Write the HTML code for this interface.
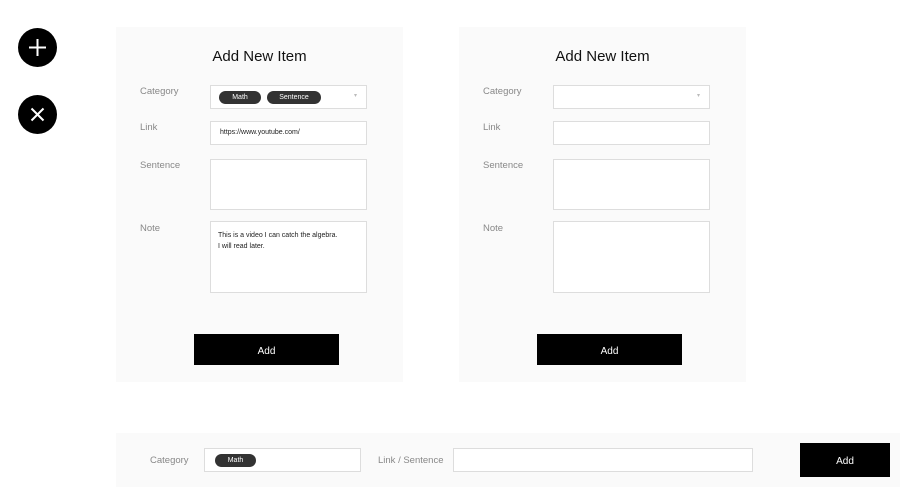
<!DOCTYPE html>
<html><head><style>
*{box-sizing:border-box;margin:0;padding:0}
body{width:900px;height:499px;background:#fff;font-family:"Liberation Sans",sans-serif;position:relative;overflow:hidden;color:#222}
.a{position:absolute}
.circ{width:39px;height:39px;border-radius:50%;background:#000}
.panel{background:#fafafa;width:287px;height:355px;top:27px}
.title{top:21px;width:100%;text-align:center;font-size:15px;color:#111}
.lbl{font-size:9.5px;color:#888;left:24px}
.box{background:#fff;border:1px solid #ddd;left:94px;width:157px}
.chip{position:absolute;background:#333;color:#fff;font-size:7px;border-radius:7px;height:13px;line-height:13px;text-align:center}
.btn{background:#000;color:#fff;font-size:10px;text-align:center}
.t{font-size:7px;color:#222}
</style></head><body>
<div class="a circ" style="left:18px;top:28px">
<svg width="39" height="39"><path d="M19.5 11v17M11 19.5h17" stroke="#fff" stroke-width="2"/></svg></div>
<div class="a circ" style="left:18px;top:95px">
<svg width="39" height="39"><path d="M13.5 13.5l12 12M25.5 13.5l-12 12" stroke="#fff" stroke-width="2"/></svg></div>

<div class="a panel" style="left:116px">
<div class="a title">Add New Item</div>
<div class="a lbl" style="top:59px">Category</div>
<div class="a box" style="top:58px;height:24px">
<div class="chip" style="left:8px;top:5px;width:42px">Math</div>
<div class="chip" style="left:56px;top:5px;width:54px">Sentence</div>
<div class="a" style="right:9px;top:6px;font-size:6px;color:#bbb">▾</div></div>
<div class="a lbl" style="top:95px">Link</div>
<div class="a box t" style="top:94px;height:24px;padding:7px 9px">https://www.youtube.com/</div>
<div class="a lbl" style="top:133px">Sentence</div>
<div class="a box" style="top:132px;height:51px"></div>
<div class="a lbl" style="top:196px">Note</div>
<div class="a box t" style="top:194px;height:72px;padding:8px 7px;line-height:11px">This is a video I can catch the algebra.<br>I will read later.</div>
<div class="a btn" style="left:78px;top:307px;width:145px;height:31px;line-height:35px">Add</div>
</div>

<div class="a panel" style="left:459px">
<div class="a title">Add New Item</div>
<div class="a lbl" style="top:59px">Category</div>
<div class="a box" style="top:58px;height:24px"><div class="a" style="right:9px;top:6px;font-size:6px;color:#bbb">▾</div></div>
<div class="a lbl" style="top:95px">Link</div>
<div class="a box" style="top:94px;height:24px"></div>
<div class="a lbl" style="top:133px">Sentence</div>
<div class="a box" style="top:132px;height:51px"></div>
<div class="a lbl" style="top:196px">Note</div>
<div class="a box" style="top:194px;height:72px"></div>
<div class="a btn" style="left:78px;top:307px;width:145px;height:31px;line-height:35px">Add</div>
</div>

<div class="a" style="left:116px;top:433px;width:784px;height:54px;background:#fafafa">
<div class="a lbl" style="left:34px;top:22px">Category</div>
<div class="a box" style="left:88px;top:15px;width:157px;height:24px">
<div class="chip" style="left:10px;top:5px;width:41px">Math</div></div>
<div class="a lbl" style="left:262px;top:22px">Link / Sentence</div>
<div class="a box" style="left:337px;top:15px;width:300px;height:24px"></div>
<div class="a btn" style="left:684px;top:10px;width:90px;height:34px;line-height:38px">Add</div>
</div>
</body></html>
